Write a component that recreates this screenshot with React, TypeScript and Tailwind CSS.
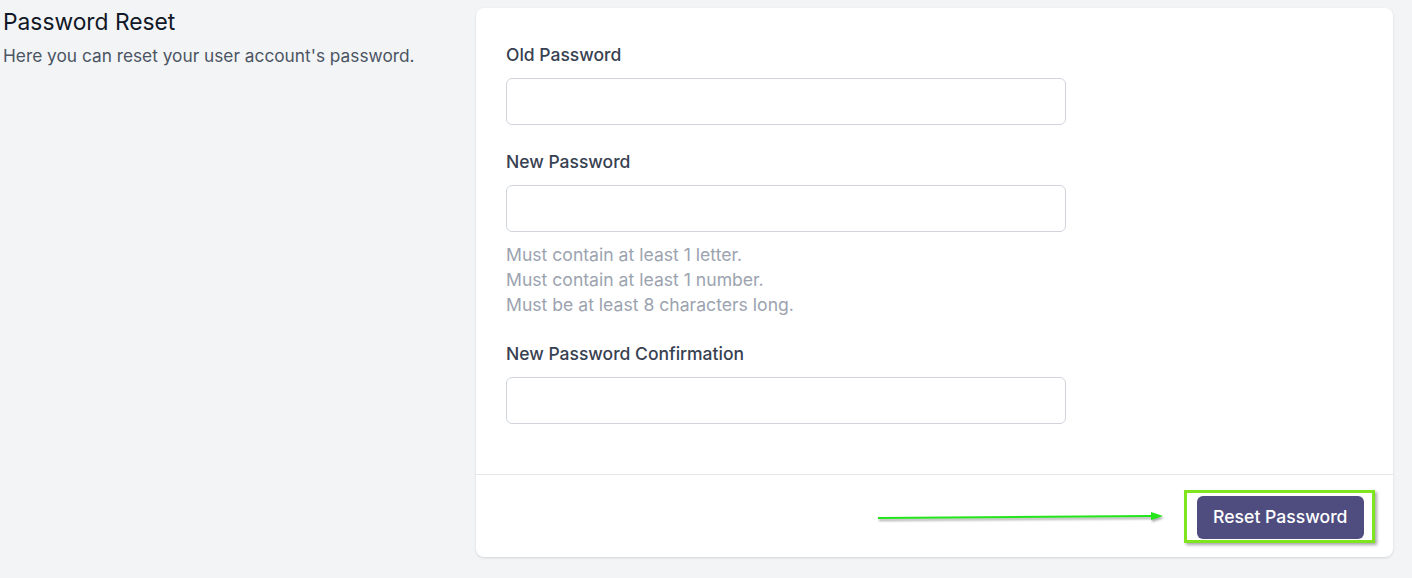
export default function App() {
  const fields = [
    { label: "Old Password", hints: [] as string[] },
    {
      label: "New Password",
      hints: [
        "Must contain at least 1 letter.",
        "Must contain at least 1 number.",
        "Must be at least 8 characters long.",
      ],
    },
    { label: "New Password Confirmation", hints: [] as string[] },
  ];

  return (
    <div
      className="min-h-[578px] bg-[#f3f4f6] pt-2 pl-[3px] text-[#1f2937]"
      style={{ fontFamily: "Inter, 'Noto Sans', sans-serif" }}
    >
      <div className="flex">
        <div className="w-[473px] shrink-0">
          <h2 className="text-[22.8px] leading-[28px] font-normal text-[#111827]">
            Password Reset
          </h2>
          <p className="mt-[7px] text-[17.3px] leading-[26px] text-[#4b5563]">
            Here you can reset your user account's password.
          </p>
        </div>

        <form className="w-[917px] shrink-0 rounded-lg bg-white shadow-sm">
          <div className="flex flex-col gap-[25px] px-[30px] pt-[35px] pb-[50px]">
            {fields.map((f) => (
              <div key={f.label}>
                <label className="block text-[17.5px] leading-[24px] font-medium text-[#374151]">
                  {f.label}
                </label>
                <input
                  type="password"
                  className="mt-[11px] block h-[47px] w-[560px] rounded-md border border-[#d1d5db] bg-white px-3"
                />
                {f.hints.length > 0 && (
                  <div className="mt-[10px] text-[17.6px] leading-[25px] text-[#9ca3af]">
                    {f.hints.map((h) => (
                      <p key={h}>{h}</p>
                    ))}
                  </div>
                )}
              </div>
            ))}
          </div>

          <div className="flex h-[83px] items-center justify-end border-t border-[#e5e7eb] pr-[18px]">
            {/* annotation arrow */}
            <svg
              width="290"
              height="12"
              viewBox="0 0 290 12"
              className="mr-[17px] drop-shadow-[1px_2px_1px_rgba(0,0,0,0.35)]"
            >
              <path d="M1 8 L276 6" stroke="#22e51a" strokeWidth="2" fill="none" />
              <path d="M274 2 L286 6 L274 10 Z" fill="#22e51a" />
            </svg>
            <div className="border-[3px] border-[#7ee51e] pt-[3px] pb-[1px] pl-[10px] pr-[8px] shadow-[2px_2px_3px_rgba(0,0,0,0.35)]">
              <button
                type="button"
                className="h-[43px] rounded-md bg-[#4f4d7f] px-[16.5px] text-[17.6px] font-medium text-white"
              >
                Reset Password
              </button>
            </div>
          </div>
        </form>
      </div>
    </div>
  );
}
